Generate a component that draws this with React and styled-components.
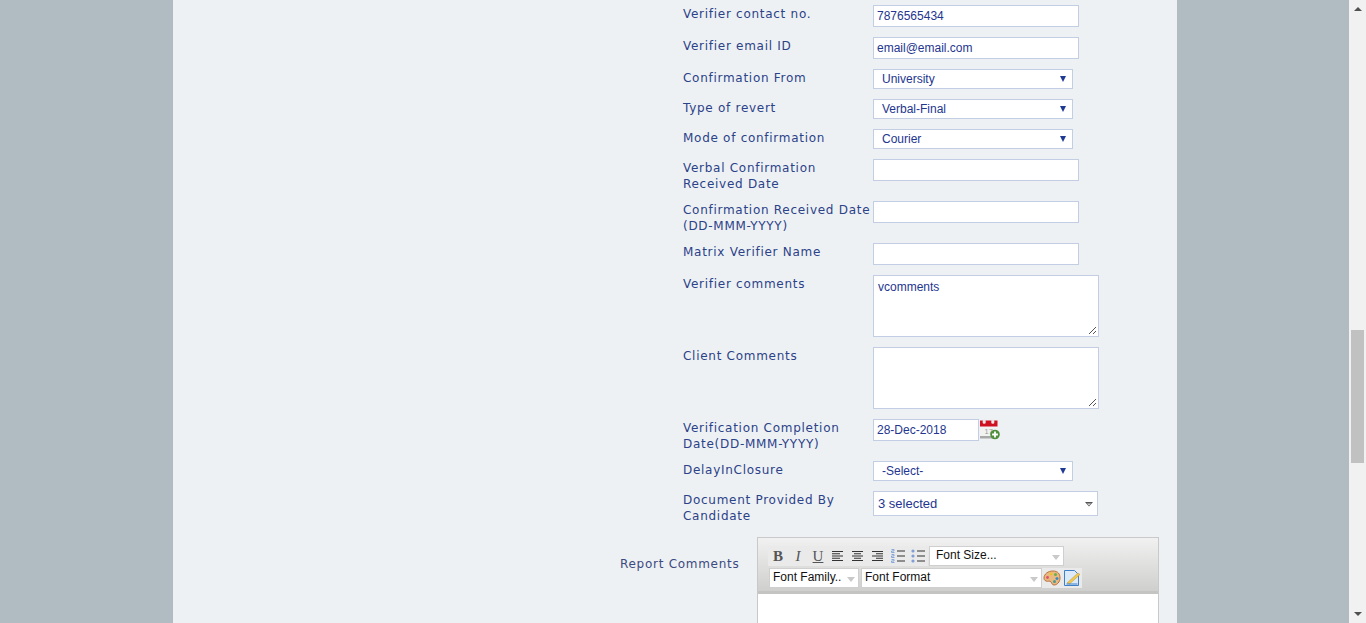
import React from "react";
import styled, { createGlobalStyle } from "styled-components";

const Global = createGlobalStyle`
  html, body { margin: 0; padding: 0; height: 100%; overflow: hidden; background: #b0bcc2; }
  #root { height: 623px; }
`;
const Page = styled.div`
  display: flex; width: 1366px; height: 623px; overflow: hidden; background: #b0bcc2;
`;
const Stage = styled.div`
  flex: 1; display: flex; justify-content: flex-start; padding-left: 173px;
`;
const Content = styled.main`
  width: 1004px; height: 623px; background: #eef1f4; overflow: hidden; box-sizing: border-box;
  padding: 5px 0 0 510px; font-family: "Liberation Sans", Arial, sans-serif;
`;
const Row = styled.div`
  display: grid; grid-template-columns: 190px 1fr; margin-bottom: ${p => p.$gap ?? 10}px; min-height: ${p => p.$h}px;
`;
const Label = styled.label`
  font-family: "DejaVu Sans", Verdana, sans-serif;
  font-size: 12px; line-height: 16px; letter-spacing: 0.72px; color: #2b4288; padding-top: 1px; margin-bottom: -1px; white-space: pre;
`;
const Input = styled.div`
  box-sizing: border-box; width: ${p => p.$w ?? 206}px; height: 22px; border: 1px solid #c3cde4; background: #fff;
  font-size: 12px; line-height: 20px; padding-left: 3px; color: #24358f;
`;
const SelectBox = styled.div`
  box-sizing: border-box; width: 200px; height: 20px; border: 1px solid #c3cde4; background: #fff;
  font-size: 12px; line-height: 18px; padding-left: 8px; color: #24358f; position: relative;
`;
const Arrow = styled.span`
  position: absolute; right: 6px; top: 6px; width: 0; height: 0;
  border-left: 3.5px solid transparent; border-right: 3.5px solid transparent; border-top: 6px solid #1f3a93;
`;
const Area = styled.div`
  box-sizing: border-box; width: 226px; height: 62px; border: 1px solid #c3cde4; background: #fff; position: relative;
  font-size: 12px; line-height: 14px; padding: 4px; color: #24358f;
`;
const Grip = styled.svg`
  position: absolute; right: 1px; bottom: 1px;
`;
const DateCell = styled.div`
  display: flex; align-items: flex-start;
`;
const CalendarSvg = styled.svg`
  flex-shrink: 0; margin-left: 1px;
`;
const MultiBox = styled.div`
  box-sizing: border-box; width: 225px; height: 25px; border: 1px solid #c3cde4; background: #fff; position: relative;
  font-size: 13px; line-height: 23px; padding-left: 4px; color: #24358f;
`;
const Chevron = styled.svg`
  position: absolute; right: 4px; top: 10px;
`;
const EditorRow = styled.div`
  display: flex; margin: 0 0 0 -63px; padding-top: 1px;
`;
const EditorLabel = styled(Label)`
  display: block; width: 137px; flex-shrink: 0; color: #3b4a80; padding-top: 19px; margin-bottom: 0;
`;
const Editor = styled.div`
  box-sizing: border-box; width: 402px; height: 120px; border: 1px solid #c9c9c9; border-bottom: 0; background: #fff; flex-shrink: 0;
`;
const Toolbar = styled.div`
  box-sizing: border-box; height: 56px; background: linear-gradient(#f1f1f1, #cfcfcd); border-bottom: 3px solid #c4c4c2;
  padding: 8px 0 0 10px; display: flex; flex-direction: column; gap: 2px;
`;
const ToolRow = styled.div`
  display: flex; align-items: center; height: 20px;
`;
const Tool = styled.div`
  width: 20px; height: 20px; display: flex; align-items: center; justify-content: center; flex-shrink: 0;
  background: #eaeaea; font-family: "Liberation Serif", serif; font-size: 15px; color: #555;
  font-weight: ${p => p.$b ? 700 : 400}; font-style: ${p => p.$i ? "italic" : "normal"};
  text-decoration: ${p => p.$u ? "underline" : "none"};
`;
const ToolSelect = styled.div`
  box-sizing: border-box; width: ${p => p.$w}px; height: ${p => p.$h ?? 20}px; background: #fff; border: 1px solid #cfcfcf; position: relative; flex-shrink: 0;
  margin-left: ${p => p.$ml ?? 0}px; font-size: 12px; line-height: 17px; padding-left: ${p => p.$pl ?? 3}px; color: #111;
  font-family: "Liberation Sans", Arial, sans-serif;
`;
const GreyArrow = styled.span`
  position: absolute; right: 3px; top: 8px; width: 0; height: 0;
  border-left: 4px solid transparent; border-right: 4px solid transparent; border-top: 5px solid #c9c9c9;
`;
const Scrollbar = styled.aside`
  width: 17px; height: 623px; background: #f1f1f1; position: relative; flex-shrink: 0;
`;
const Thumb = styled.div`
  position: absolute; left: 2px; top: 330px; width: 13px; height: 133px; background: #c1c1c1;
`;
const ScrollBtn = styled.div`
  position: absolute; left: 5px; ${p => p.$up ? "top: 7px" : "bottom: 7px"}; width: 0; height: 0;
  border-left: 4px solid transparent; border-right: 4px solid transparent;
  ${p => p.$up ? "border-bottom: 4px solid #505050" : "border-top: 4px solid #505050"};
`;

const LineIcon = ({ kind }) => {
  const lines = { left: [[1,11],[1,8],[1,11],[1,8],[1,11]], center: [[1,12],[3,10],[1,12],[3,10],[1,12]], right: [[1,12],[5,12],[1,12],[5,12],[1,12]] }[kind];
  return (
    <svg width="14" height="12" viewBox="0 0 14 12">
      {lines.map((l, i) => <path key={i} d={`M${l[0]} ${1.5 + i * 2.25}H${l[1] + (kind === "left" ? 1 : 0)}`} stroke="#333" strokeWidth="1" />)}
    </svg>
  );
};
const ListIcon = ({ numbered }) => (
  <svg width="16" height="14" viewBox="0 0 16 14">
    {[2, 7, 12].map(y => <path key={y} d={`M7 ${y}H15`} stroke="#333" strokeWidth="1" />)}
    {[2, 7, 12].map(y => numbered
      ? <path key={"n" + y} d={`M1.5 ${y - 1.5}H4V${y}H1.5V${y + 1.5}H4.5`} fill="none" stroke="#88a8dc" strokeWidth="1" />
      : <circle key={"n" + y} cx="3" cy={y} r="1.6" fill="#7f9ed6" />)}
  </svg>
);
const CalendarIcon = () => (
  <CalendarSvg width="20" height="21" viewBox="0 0 20 21">
    <rect x="0" y="7" width="17.5" height="11" fill="#f2f2f2" />
    <rect x="0" y="17" width="17.5" height="2.5" fill="#a8a8a8" />
    <rect x="0" y="1.5" width="17.5" height="6" fill="#cf1020" />
    <rect x="2.7" y="0.5" width="3" height="4.2" rx="1.2" fill="#e6e6e6" />
    <rect x="11.3" y="0.5" width="3" height="4.2" rx="1.2" fill="#e6e6e6" />
    <text x="4.5" y="14.5" fontSize="7.5" fontFamily="Liberation Sans, sans-serif" fill="#9a9a9a">17</text>
    <circle cx="15" cy="15.5" r="4.8" fill="#4f8f3a" />
    <path d="M15 12.6v5.8M12.1 15.5h5.8" stroke="#fff" strokeWidth="1.8" />
  </CalendarSvg>
);
const PaletteIcon = () => (
  <svg width="18" height="18" viewBox="0 0 18 18">
    <path d="M1 9C1 5 5 2 10 2s7 3 7 7-3 7-6 7c-2 0-2-2-3-3-1-2-3 0-5-1S1 10 1 9z" fill="#e9b982" stroke="#b9703a" />
    <circle cx="4.5" cy="8.5" r="1.4" fill="#e0506a" />
    <circle cx="8" cy="5" r="1.4" fill="#f0c030" />
    <circle cx="12.5" cy="5.5" r="1.5" fill="#6cae4c" />
    <circle cx="14" cy="9.5" r="1.5" fill="#3d8cc0" />
    <circle cx="11.5" cy="12.5" r="1.5" fill="#4a9a90" />
  </svg>
);
const EditIcon = () => (
  <svg width="18" height="18" viewBox="0 0 18 18">
    <path d="M1.5 1.5h10l4 4v11h-14z" fill="#dce9f8" stroke="#3f7fc8" />
    <path d="M4 14l11-10 2 1.5L6.5 15z" fill="#f2c94c" stroke="#b8963a" strokeWidth=".5" />
    <path d="M3.5 15h11" stroke="#3f7fc8" />
  </svg>
);
const Text = ({ label, value, gap, h }) => (
  <Row $gap={gap} $h={h}><Label>{label}</Label><Input>{value}</Input></Row>
);
const Sel = ({ label, value, gap }) => (
  <Row $gap={gap}><Label>{label}</Label><SelectBox>{value}<Arrow /></SelectBox></Row>
);
const TextArea = ({ label, value }) => (
  <Row><Label>{label}</Label><Area>{value}
    <Grip width="10" height="10" viewBox="0 0 10 10"><path d="M9 2L2 9M9 6L6 9" stroke="#555" /></Grip>
  </Area></Row>
);

export default function App() {
  return (
    <Page>
      <Global />
      <Stage>
        <Content>
          <Text label="Verifier contact no." value="7876565434" />
          <Text label="Verifier email ID" value="email@email.com" />
          <Sel label="Confirmation From" value="University" />
          <Sel label="Type of revert" value="Verbal-Final" />
          <Sel label="Mode of confirmation" value="Courier" />
          <Text label={"Verbal Confirmation\nReceived Date"} h={32} />
          <Text label={"Confirmation Received Date\n(DD-MMM-YYYY)"} h={32} />
          <Text label="Matrix Verifier Name" />
          <TextArea label="Verifier comments" value="vcomments" />
          <TextArea label="Client Comments" />
          <Row $h={32}>
            <Label>{"Verification Completion\nDate(DD-MMM-YYYY)"}</Label>
            <DateCell><Input $w={106}>28-Dec-2018</Input><CalendarIcon /></DateCell>
          </Row>
          <Sel label="DelayInClosure" value="-Select-" />
          <Row $gap={13} $h={32}>
            <Label>{"Document Provided By\nCandidate"}</Label>
            <MultiBox>3 selected
              <Chevron width="8" height="5" viewBox="0 0 8 5"><path d="M0 0h8L4 4.5z" fill="#555" /><path d="M2 1.6h4L4 3.4z" fill="#ddd" /></Chevron>
            </MultiBox>
          </Row>
          <EditorRow>
            <EditorLabel>Report Comments</EditorLabel>
            <Editor>
              <Toolbar>
                <ToolRow>
                  <Tool $b>B</Tool><Tool $i>I</Tool><Tool $u>U</Tool>
                  <Tool><LineIcon kind="left" /></Tool><Tool><LineIcon kind="center" /></Tool><Tool><LineIcon kind="right" /></Tool>
                  <Tool><ListIcon numbered /></Tool><Tool><ListIcon /></Tool>
                  <ToolSelect $w={135} $pl={6} $ml={1}>Font Size...<GreyArrow /></ToolSelect>
                </ToolRow>
                <ToolRow>
                  <ToolSelect $w={90} $ml={1}>Font Family..<GreyArrow /></ToolSelect>
                  <ToolSelect $w={181} $ml={2}>Font Format<GreyArrow /></ToolSelect>
                  <Tool><PaletteIcon /></Tool><Tool><EditIcon /></Tool>
                </ToolRow>
              </Toolbar>
            </Editor>
          </EditorRow>
        </Content>
      </Stage>
      <Scrollbar>
        <ScrollBtn $up /><Thumb /><ScrollBtn />
      </Scrollbar>
    </Page>
  );
}
